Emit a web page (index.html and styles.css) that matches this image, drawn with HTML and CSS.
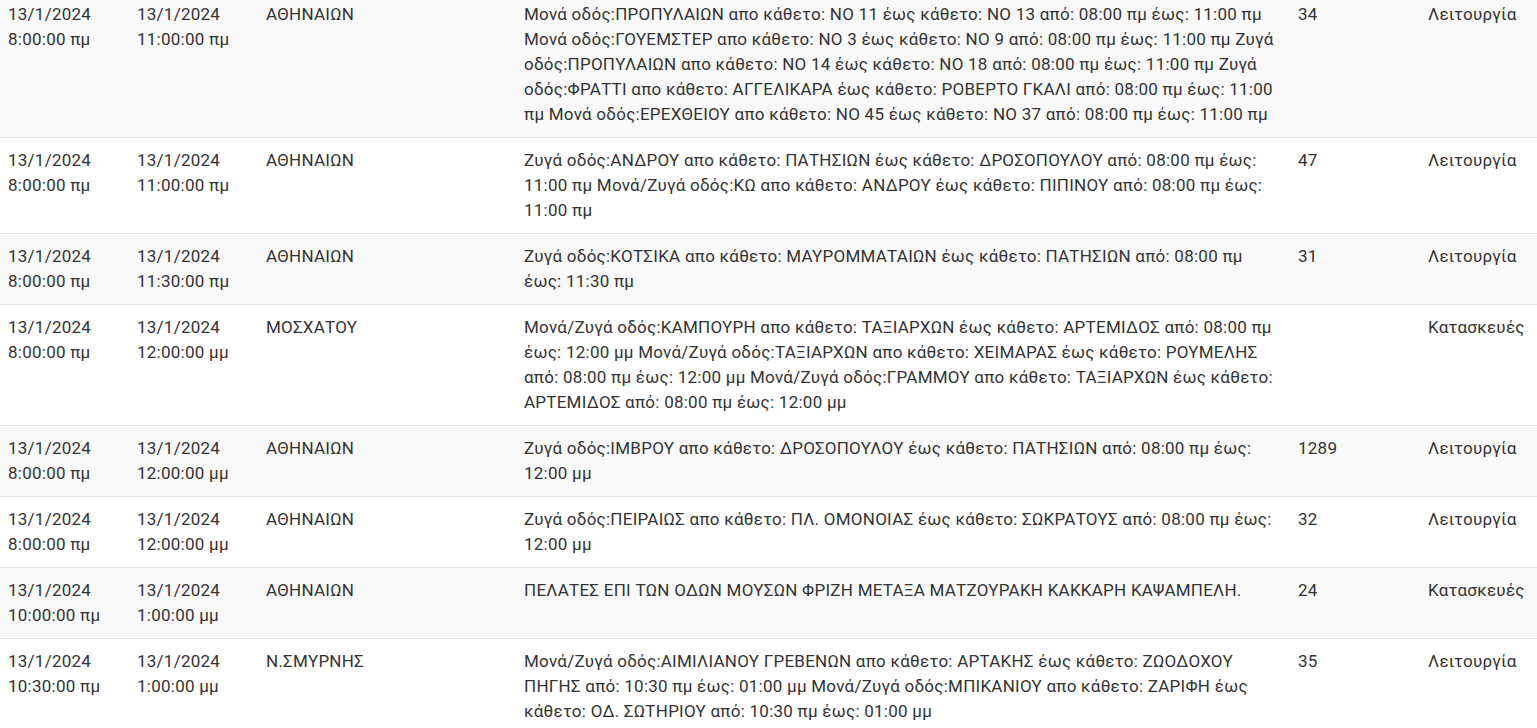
FILE: index.html
```html
<!DOCTYPE html>
<html lang="el">
<head>
  <meta charset="UTF-8" />
  <title>Διακοπές</title>
  <link rel="stylesheet" href="styles.css">
</head>
<body>
  <table class="outages">
    <colgroup>
      <col class="c-date" />
      <col class="c-date" />
      <col class="c-area" />
      <col class="c-desc" />
      <col class="c-num" />
      <col />
    </colgroup>
    <tbody>
      <tr>
        <td>13/1/2024 8:00:00 πμ</td>
        <td>13/1/2024 11:00:00 πμ</td>
        <td>ΑΘΗΝΑΙΩΝ</td>
        <td>Μονά οδός:ΠΡΟΠΥΛΑΙΩΝ απο κάθετο: ΝΟ 11 έως κάθετο: ΝΟ 13 από: 08:00 πμ έως: 11:00 πμ Μονά οδός:ΓΟΥΕΜΣΤΕΡ απο κάθετο: ΝΟ 3 έως κάθετο: ΝΟ 9 από: 08:00 πμ έως: 11:00 πμ Ζυγά οδός:ΠΡΟΠΥΛΑΙΩΝ απο κάθετο: ΝΟ 14 έως κάθετο: ΝΟ 18 από: 08:00 πμ έως: 11:00 πμ Ζυγά οδός:ΦΡΑΤΤΙ απο κάθετο: ΑΓΓΕΛΙΚΑΡΑ έως κάθετο: ΡΟΒΕΡΤΟ ΓΚΑΛΙ από: 08:00 πμ έως: 11:00 πμ Μονά οδός:ΕΡΕΧΘΕΙΟΥ απο κάθετο: ΝΟ 45 έως κάθετο: ΝΟ 37 από: 08:00 πμ έως: 11:00 πμ</td>
        <td>34</td>
        <td>Λειτουργία</td>
      </tr>
      <tr>
        <td>13/1/2024 8:00:00 πμ</td>
        <td>13/1/2024 11:00:00 πμ</td>
        <td>ΑΘΗΝΑΙΩΝ</td>
        <td>Ζυγά οδός:ΑΝΔΡΟΥ απο κάθετο: ΠΑΤΗΣΙΩΝ έως κάθετο: ΔΡΟΣΟΠΟΥΛΟΥ από: 08:00 πμ έως: 11:00 πμ Μονά/Ζυγά οδός:ΚΩ απο κάθετο: ΑΝΔΡΟΥ έως κάθετο: ΠΙΠΙΝΟΥ από: 08:00 πμ έως: 11:00 πμ</td>
        <td>47</td>
        <td>Λειτουργία</td>
      </tr>
      <tr>
        <td>13/1/2024 8:00:00 πμ</td>
        <td>13/1/2024 11:30:00 πμ</td>
        <td>ΑΘΗΝΑΙΩΝ</td>
        <td>Ζυγά οδός:ΚΟΤΣΙΚΑ απο κάθετο: ΜΑΥΡΟΜΜΑΤΑΙΩΝ έως κάθετο: ΠΑΤΗΣΙΩΝ από: 08:00 πμ έως: 11:30 πμ</td>
        <td>31</td>
        <td>Λειτουργία</td>
      </tr>
      <tr>
        <td>13/1/2024 8:00:00 πμ</td>
        <td>13/1/2024 12:00:00 μμ</td>
        <td>ΜΟΣΧΑΤΟΥ</td>
        <td>Μονά/Ζυγά οδός:ΚΑΜΠΟΥΡΗ απο κάθετο: ΤΑΞΙΑΡΧΩΝ έως κάθετο: ΑΡΤΕΜΙΔΟΣ από: 08:00 πμ έως: 12:00 μμ Μονά/Ζυγά οδός:ΤΑΞΙΑΡΧΩΝ απο κάθετο: ΧΕΙΜΑΡΑΣ έως κάθετο: ΡΟΥΜΕΛΗΣ από: 08:00 πμ έως: 12:00 μμ Μονά/Ζυγά οδός:ΓΡΑΜΜΟΥ απο κάθετο: ΤΑΞΙΑΡΧΩΝ έως κάθετο: ΑΡΤΕΜΙΔΟΣ από: 08:00 πμ έως: 12:00 μμ</td>
        <td></td>
        <td>Κατασκευές</td>
      </tr>
      <tr>
        <td>13/1/2024 8:00:00 πμ</td>
        <td>13/1/2024 12:00:00 μμ</td>
        <td>ΑΘΗΝΑΙΩΝ</td>
        <td>Ζυγά οδός:ΙΜΒΡΟΥ απο κάθετο: ΔΡΟΣΟΠΟΥΛΟΥ έως κάθετο: ΠΑΤΗΣΙΩΝ από: 08:00 πμ έως: 12:00 μμ</td>
        <td>1289</td>
        <td>Λειτουργία</td>
      </tr>
      <tr>
        <td>13/1/2024 8:00:00 πμ</td>
        <td>13/1/2024 12:00:00 μμ</td>
        <td>ΑΘΗΝΑΙΩΝ</td>
        <td>Ζυγά οδός:ΠΕΙΡΑΙΩΣ απο κάθετο: ΠΛ. ΟΜΟΝΟΙΑΣ έως κάθετο: ΣΩΚΡΑΤΟΥΣ από: 08:00 πμ έως: 12:00 μμ</td>
        <td>32</td>
        <td>Λειτουργία</td>
      </tr>
      <tr>
        <td>13/1/2024 10:00:00 πμ</td>
        <td>13/1/2024 1:00:00 μμ</td>
        <td>ΑΘΗΝΑΙΩΝ</td>
        <td>ΠΕΛΑΤΕΣ ΕΠΙ ΤΩΝ ΟΔΩΝ ΜΟΥΣΩΝ ΦΡΙΖΗ ΜΕΤΑΞΑ ΜΑΤΖΟΥΡΑΚΗ ΚΑΚΚΑΡΗ ΚΑΨΑΜΠΕΛΗ.</td>
        <td>24</td>
        <td>Κατασκευές</td>
      </tr>
      <tr>
        <td>13/1/2024 10:30:00 πμ</td>
        <td>13/1/2024 1:00:00 μμ</td>
        <td>Ν.ΣΜΥΡΝΗΣ</td>
        <td>Μονά/Ζυγά οδός:ΑΙΜΙΛΙΑΝΟΥ ΓΡΕΒΕΝΩΝ απο κάθετο: ΑΡΤΑΚΗΣ έως κάθετο: ΖΩΟΔΟΧΟΥ ΠΗΓΗΣ από: 10:30 πμ έως: 01:00 μμ Μονά/Ζυγά οδός:ΜΠΙΚΑΝΙΟΥ απο κάθετο: ΖΑΡΙΦΗ έως κάθετο: ΟΔ. ΣΩΤΗΡΙΟΥ από: 10:30 πμ έως: 01:00 μμ</td>
        <td>35</td>
        <td>Λειτουργία</td>
      </tr>
    </tbody>
  </table>
</body>
</html>
```

FILE: styles.css
```css
body {
  margin: 0;
  font-family: Roboto, "Noto Sans", sans-serif;
  font-size: 17px;
  letter-spacing: 0.25px;
  color: #333;
  background: #fff;
}

.outages {
  width: 100%;
  border-collapse: collapse;
  table-layout: fixed;
  /* page is scrolled slightly past the top of the first row */
  margin-top: -9px;
}

.c-date {
  width: 129px;
}

.c-area {
  width: 258px;
}

.c-desc {
  width: 774px;
}

.c-num {
  width: 130px;
}

.outages td {
  vertical-align: top;
  padding: 10px 8px;
  line-height: 25px;
  border-top: 1px solid #e3e3e3;
}

.outages tr:nth-child(odd) {
  background: #f9f9f9;
}
```
